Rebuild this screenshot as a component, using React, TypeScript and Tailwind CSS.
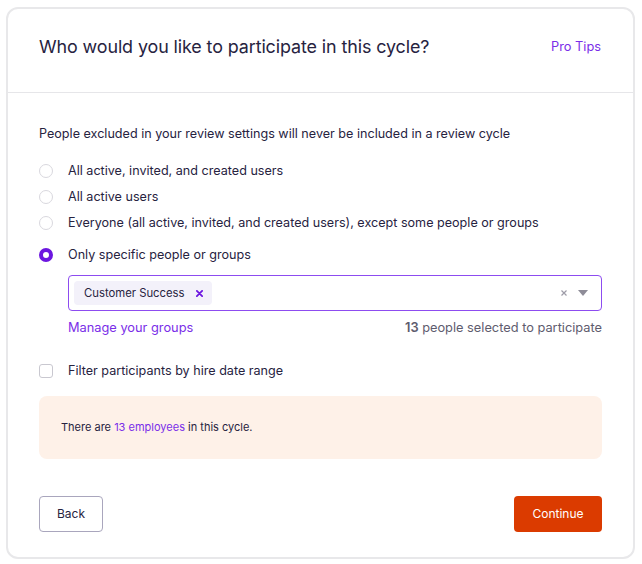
import React from 'react';

const options = [
    'All active, invited, and created users',
    'All active users',
    'Everyone (all active, invited, and created users), except some people or groups',
];

const Radio: React.FC<{ checked?: boolean }> = ({ checked }) =>
    checked ? (
        <span className="block h-[14px] w-[14px] shrink-0 rounded-full border-[4px] border-[#6c16e0] bg-white" />
    ) : (
        <span className="block h-[14px] w-[14px] shrink-0 rounded-full border border-[#d9d8de] bg-white" />
    );

export default function App() {
    const [selected] = React.useState(3);

    return (
        <div className="min-h-[564px] bg-white pl-[6px] pt-[7px] font-['Inter',sans-serif] text-[#27233f]">
            <div className="flex h-[552px] w-[629px] flex-col rounded-[12px] border-2 border-[#e8e8ea]">
                <header className="flex h-[84px] items-start justify-between border-b border-[#e6e6e9] pl-[31px] pr-[32px] pt-[24px]">
                    <h1 className="text-[17.9px] leading-[28px] tracking-[-0.1px]">Who would you like to participate in this cycle?</h1>
                    <a className="pt-[1px] text-[12.8px] leading-[26px] text-[#7a2ee8]">Pro Tips</a>
                </header>

                <div className="flex flex-1 flex-col px-[31px] pt-[31px]">
                    <p className="text-[12.6px] leading-[20px]">
                        People excluded in your review settings will never be included in a review cycle
                    </p>

                    <div className="mt-[14px] flex flex-col">
                        {options.map((label, i) => (
                            <label key={label} className="flex h-[26px] items-center gap-[15px] text-[12.6px]">
                                <Radio checked={selected === i} />
                                <span>{label}</span>
                            </label>
                        ))}
                        <label className="mt-[6px] flex h-[26px] items-center gap-[15px] text-[12.6px]">
                            <Radio checked={selected === 3} />
                            <span>Only specific people or groups</span>
                        </label>
                    </div>

                    <div className="ml-[29px] mt-[7px]">
                        <div className="flex h-[36px] items-center rounded-[4px] border border-[#8d4cf0] pl-[5px] pr-[13px]">
                            <span className="flex h-[24px] items-center gap-[11px] rounded-[4px] bg-[#f3f1fa] pl-[10px] pr-[9px] text-[11.3px]">
                                Customer Success
                                <svg width="7" height="7" viewBox="0 0 8 8" className="text-[#6c16e0]">
                                    <path d="M1 1L7 7M7 1L1 7" stroke="currentColor" strokeWidth="2" strokeLinecap="round" />
                                </svg>
                            </span>
                            <div className="flex-1" />
                            <svg width="8" height="8" viewBox="0 0 8 8" className="text-[#9e9ca8]">
                                <path d="M1.5 1.5L6.5 6.5M6.5 1.5L1.5 6.5" stroke="currentColor" strokeWidth="1.2" />
                            </svg>
                            <svg width="10" height="6" viewBox="0 0 10 6" className="ml-[10px] text-[#8e8c98]">
                                <path d="M0 0H10L5 6Z" fill="currentColor" />
                            </svg>
                        </div>
                        <div className="mt-[8px] flex items-center justify-between text-[12.8px] leading-[18px]">
                            <a className="text-[#7a2ee8]">Manage your groups</a>
                            <span className="text-[#5e5b6e]">
                                <span className="font-semibold">13</span> people selected to participate
                            </span>
                        </div>
                    </div>

                    <label className="mt-[24px] flex h-[20px] items-center gap-[15px] text-[12.6px]">
                        <span className="block h-[14px] w-[14px] rounded-[3px] border border-[#c9c8d0] bg-white" />
                        <span>Filter participants by hire date range</span>
                    </label>

                    <div className="mt-[15px] flex h-[63px] items-center rounded-[8px] bg-[#fef1e8] px-[22px] text-[11px]">
                        <span>
                            There are <span className="text-[#7a2ee8]">13 employees</span> in this cycle.
                        </span>
                    </div>

                    <div className="mt-[37px] flex items-center justify-between">
                        <button className="h-[36px] w-[64px] rounded-[4px] border border-[#a9a6bd] bg-white text-[12px] text-[#27233f]">
                            Back
                        </button>
                        <button className="h-[36px] w-[88px] rounded-[4px] bg-[#db3b00] text-[12px] text-white">
                            Continue
                        </button>
                    </div>
                </div>
            </div>
        </div>
    );
}
